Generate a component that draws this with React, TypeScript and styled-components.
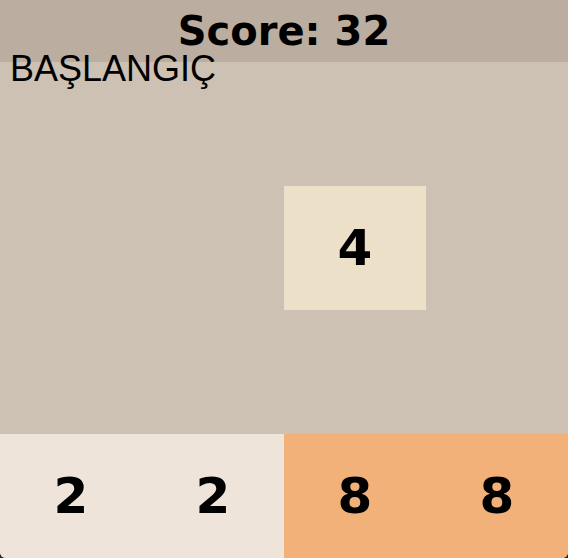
import React from "react";
import styled, { createGlobalStyle } from "styled-components";

const Global = createGlobalStyle`
  html, body { margin: 0; padding: 0; background: #2a2a2a; }
  body { width: 568px; height: 558px; overflow: hidden; }
`;

const Shell = styled.div`
  position: relative;
  width: 568px;
  height: 558px;
  display: flex;
  flex-direction: column;
  border-radius: 0 0 6px 6px;
  overflow: hidden;
  background: #cdc1b4;
`;

const Header = styled.header`
  height: 62px;
  flex: none;
  display: flex;
  align-items: center;
  justify-content: center;
  background: #bbada0;
  font-family: "DejaVu Sans", sans-serif;
  font-weight: bold;
  font-size: 40px;
  color: #000;
`;

const Board = styled.div`
  flex: 1;
  display: grid;
  grid-template-columns: repeat(4, 142px);
  grid-template-rows: repeat(4, 124px);
  background: #cdc1b4;
`;

const colors: Record<number, string> = {
  0: "transparent",
  2: "#eee4da",
  4: "#ede0c8",
  8: "#f2b179",
};

const Cell = styled.div<{ $v: number }>`
  display: flex;
  align-items: center;
  justify-content: center;
  background: ${(p) => colors[p.$v] ?? "#edc22e"};
  font-family: "DejaVu Sans", sans-serif;
  font-weight: bold;
  font-size: 50px;
  color: #000;
`;

const StartButton = styled.div`
  position: absolute;
  top: 49px;
  left: 10px;
  font-family: "Liberation Sans", Arial, sans-serif;
  font-size: 36px;
  line-height: 40px;
  color: #000;
  cursor: pointer;
`;

const grid = [
  [0, 0, 0, 0],
  [0, 0, 4, 0],
  [0, 0, 0, 0],
  [2, 2, 8, 8],
];

export default function App() {
  return (
    <>
      <Global />
      <Shell>
        <Header>Score: 32</Header>
        <Board>
          {grid.flat().map((v, i) => (
            <Cell key={i} $v={v}>
              {v ? v : ""}
            </Cell>
          ))}
        </Board>
        <StartButton>BAŞLANGIÇ</StartButton>
      </Shell>
    </>
  );
}
